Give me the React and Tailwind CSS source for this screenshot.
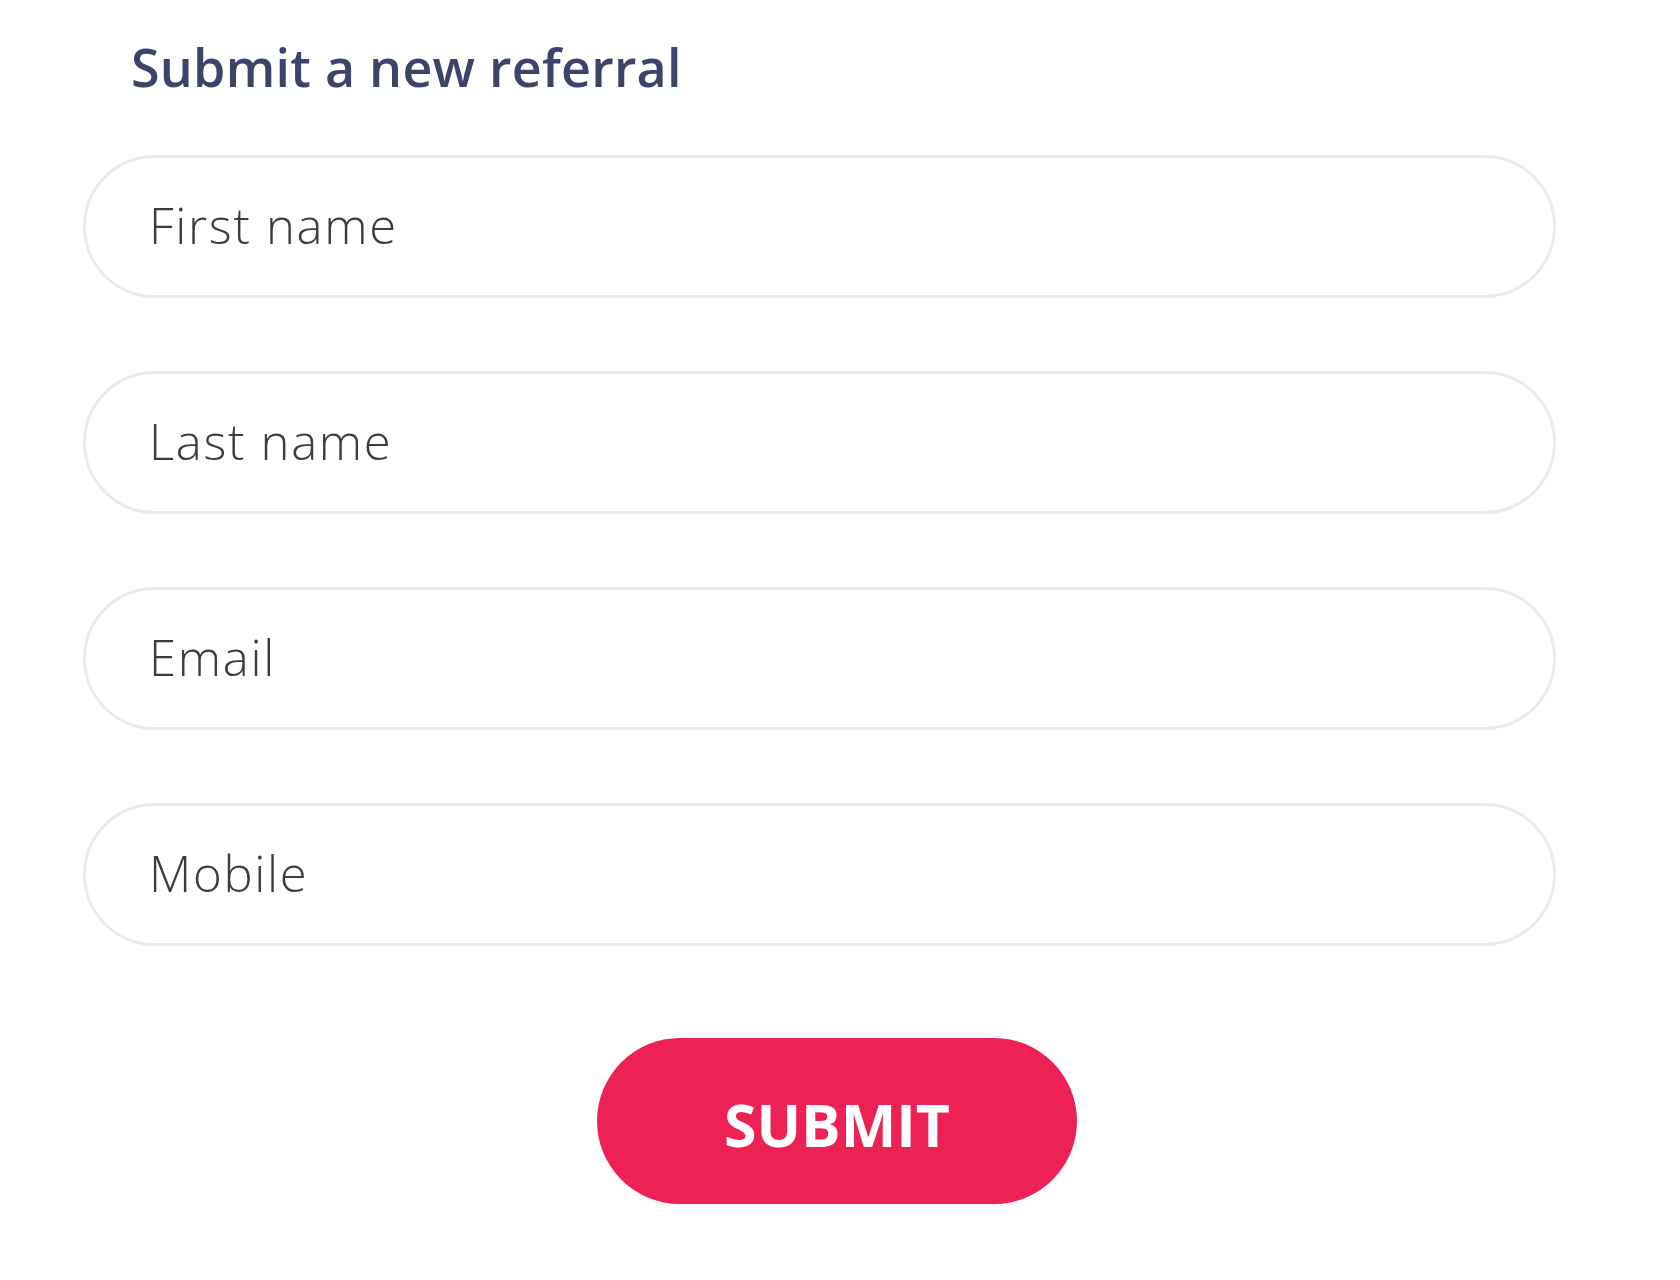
import { useState } from 'react'

const fields = [
    { name: 'firstName', label: 'First name', type: 'text' },
    { name: 'lastName', label: 'Last name', type: 'text' },
    { name: 'email', label: 'Email', type: 'email' },
    { name: 'mobile', label: 'Mobile', type: 'tel' },
]

export default function App() {
    const [values, setValues] = useState({ firstName: '', lastName: '', email: '', mobile: '' })

    const update = (name, value) => {
        setValues({ ...values, [name]: value })
    }

    const submit = (e) => {
        e.preventDefault()
        console.log(values)
    }

    return (
        <div className="min-h-screen bg-white font-['Open_Sans',sans-serif]">
            <form onSubmit={submit} className="w-[1680px] pl-[83px] pt-[31px]">

                <h2 className="ml-[48px] text-[52px] leading-[72px] font-semibold text-[#3d4469] tracking-[0.25px]">
                    Submit a new referral
                </h2>

                {/* inputs */}
                <div className="mt-[52px] flex flex-col gap-[73px] w-[1473px]">
                    {fields.map((field) =>
                        <input
                            key={field.name}
                            type={field.type}
                            placeholder={field.label}
                            value={values[field.name]}
                            onChange={(e) => update(field.name, e.target.value)}
                            className="h-[143px] w-full rounded-full border-[3px] border-[#e7ecec] bg-white pl-[63px] pr-[60px] pb-[4px] text-[49px] font-light tracking-[1.7px] text-[#3c3c40] placeholder:text-[#3c3c40] outline-none"
                        />
                    )}
                </div>

                <div className="mt-[92px] ml-[514px]">
                    <button
                        type="submit"
                        className="h-[166px] w-[480px] rounded-full bg-[#ee2154] pt-[6px] text-[59px] font-bold text-white"
                    >
                        SUBMIT
                    </button>
                </div>
            </form>
        </div>
    )
}
